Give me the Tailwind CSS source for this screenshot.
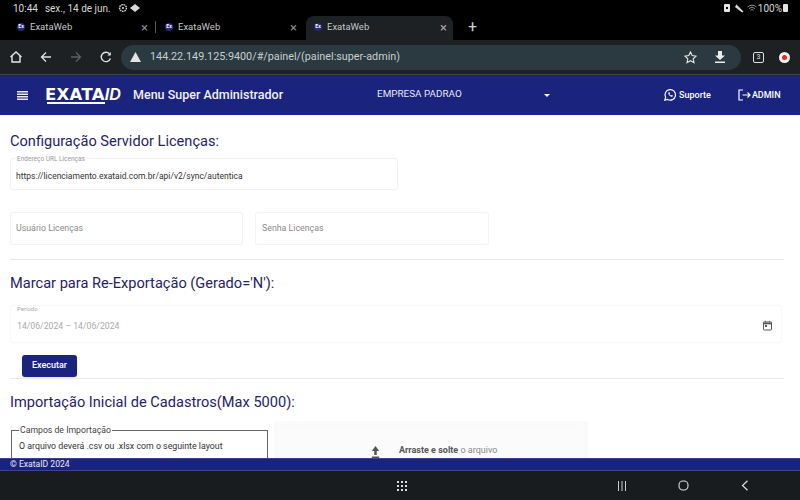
<!DOCTYPE html>
<html lang="en">
<head>
    <meta charset="UTF-8">
    <title>ExataWeb</title>
    <script src="https://cdn.jsdelivr.net/npm/@tailwindcss/browser@4"></script>
</head>
<body class="bg-white font-['Roboto',sans-serif] overflow-hidden">
<div class="w-[800px] h-[500px] flex flex-col overflow-hidden">

    <!-- status bar -->
    <div class="h-4 shrink-0 bg-black text-[#d8d8d8] text-[10px] flex items-center justify-between pl-[13px] pr-[12px]">
        <div class="flex items-center gap-[7px]">
            <span>10:44</span><span>sex., 14 de jun.</span>
            <svg class="w-[10px] h-[10px]" viewBox="0 0 10 10" fill="none" stroke="#d8d8d8" stroke-width="1.4"><circle cx="5" cy="5" r="3.4" stroke-dasharray="1.6 .7"/><circle cx="5" cy="5" r="1" fill="#d8d8d8" stroke="none"/></svg>
            <svg class="w-[10px] h-[8px] -ml-[5px]" viewBox="0 0 10 8" fill="#d8d8d8"><path d="M5 0l5 4-5 4-5-4z"/></svg>
        </div>
        <div class="flex items-center">
            <svg class="w-[6px] h-[8px]" viewBox="0 0 6 8"><rect width="6" height="8" rx="1" fill="#e5e5e5"/><rect x="2" y="3" width="2" height="2" fill="#000"/></svg>
            <svg class="w-[9px] h-[9px] ml-[5px]" viewBox="0 0 9 9" fill="none" stroke="#d8d8d8"><path d="M1 3h2l3 3v1zM1 1l7 7" stroke-width="1.3"/></svg>
            <svg class="w-[10px] h-[9px] ml-[3px]" viewBox="0 0 10 9" fill="none" stroke="#9a9a9a" stroke-width=".9"><path d="M.5 3a6.5 6.5 0 0 1 9 0M2 4.6a4.4 4.4 0 0 1 6 0M3.500 6.200a2.200 2.200 0 0 1 3 0"/></svg>
            <span class="ml-[1px]">100%</span>
            <svg class="w-[5px] h-[8px] ml-px" viewBox="0 0 5 8"><rect width="5" height="8" rx="1" fill="#e5e5e5"/></svg>
        </div>
    </div>

    <!-- tabs -->
    <div class="h-6 shrink-0 bg-black text-[#c4c7c5] text-[9.5px] flex items-stretch pl-[9px]">
        <div class="w-[148px] flex items-center pl-2 pr-px pb-[2px]">
            <span class="w-[8px] h-[8px] rounded-full bg-[#26287a] text-white text-[5px] font-bold flex items-center justify-center mr-[5px]">Ex</span>
            <span>ExataWeb</span>
            <span class="ml-auto text-[#8a8d90] text-[13px] leading-none">×</span>
            <span class="w-px h-[12px] bg-[#555] ml-[7px]"></span>
        </div>
        <div class="w-[148px] flex items-center pl-2 pr-[8px] pb-[2px]">
            <span class="w-[8px] h-[8px] rounded-full bg-[#26287a] text-white text-[5px] font-bold flex items-center justify-center mr-[5px]">Ex</span>
            <span>ExataWeb</span>
            <span class="ml-auto text-[#8a8d90] text-[13px] leading-none">×</span>
        </div>
        <div class="w-[147px] flex items-center pl-[8px] pr-[6px] pb-[2px] bg-[#1e2124] rounded-t-lg ml-[1px]">
            <span class="w-[8px] h-[8px] rounded-full bg-[#26287a] text-white text-[5px] font-bold flex items-center justify-center mr-[5px]">Ex</span>
            <span>ExataWeb</span>
            <span class="ml-auto text-[#a5a8aa] text-[13px] leading-none">×</span>
        </div>
        <span class="ml-[15px] mb-[2px] text-[#d0d0d0] text-[16px] leading-none self-center">+</span>
    </div>

    <!-- toolbar -->
    <div class="h-[35px] shrink-0 bg-[#1e2124] flex items-center pl-[9px] pr-[11px] border-b border-[#3d4048]">
        <svg class="w-[14px] h-[14px] shrink-0" viewBox="0 0 14 14" fill="none" stroke="#e6e6e6" stroke-width="1.4"><path d="M1.500 7L7 2l5.500 5M3 6v6h8V6"/></svg>
        <svg class="w-[12px] h-[12px] shrink-0 ml-[17px]" viewBox="0 0 12 12" fill="none" stroke="#e0e0e0" stroke-width="1.3"><path d="M11 6H1.500M6 1.500L1.500 6 6 10.500"/></svg>
        <svg class="w-[12px] h-[12px] shrink-0 ml-[18px]" viewBox="0 0 12 12" fill="none" stroke="#5d6064" stroke-width="1.3"><path d="M1 6h9.500M6 1.500L10.500 6 6 10.500"/></svg>
        <svg class="w-[12px] h-[12px] shrink-0 ml-[18px]" viewBox="0 0 12 12" fill="none" stroke="#e0e0e0" stroke-width="1.4"><path d="M10.400 7.500A4.700 4.700 0 1 1 9.500 2.800"/><path d="M10.800 1v3.400H7.400z" fill="#e0e0e0" stroke="none"/></svg>
        <div class="ml-[9px] shrink-0 w-[620px] h-[25px] rounded-full bg-[#2a3a40] flex items-center pl-[9px] pr-[15px] text-[#c9ced0] text-[10.8px]">
            <svg class="w-[11px] h-[10px] mr-[9px]" viewBox="0 0 11 10" fill="#e4e4e4"><path d="M5.500 0L11 10H0z"/></svg>
            <span>144.22.149.125:9400/#/painel/(painel:super-admin)</span>
            <svg class="w-[13px] h-[13px] ml-auto" viewBox="0 0 13 13" fill="none" stroke="#e6e6e6" stroke-width="1.1"><path d="M6.500 1l1.700 3.600 3.900.5-2.900 2.700.8 3.900-3.500-2-3.500 2 .8-3.900L.9 5.100l3.900-.5z"/></svg>
            <svg class="w-[12px] h-[12px] ml-[17px]" viewBox="0 0 12 12" fill="#ececec"><path d="M4 0h4v4.500h3L6 9 1 4.500h3zM1 10.500h10V12H1z"/></svg>
        </div>
        <span class="ml-[12px] shrink-0 w-[11px] h-[11px] border border-[#e0e0e0] rounded-[2px] text-[#e0e0e0] text-[7px] leading-none flex items-center justify-center">3</span>
        <span class="ml-[15px] shrink-0 w-[11px] h-[11px] rounded-full bg-[#f3f3f3] flex items-center justify-center"><span class="w-[5px] h-[5px] rounded-full bg-[#d93025]"></span></span>
    </div>

    <!-- app header -->
    <header class="h-[40px] shrink-0 bg-[#1a237e] text-white flex items-center">
        <svg class="w-[11px] h-[9px] ml-[17px]" viewBox="0 0 11 9" fill="#e8e8f4"><path d="M0 0h11v1.400H0zM0 2.500h11v1.400H0zM0 5h11v1.400H0zM0 7.600h11V9H0z"/></svg>
        <div class="ml-[17px] relative w-[79px] h-[22px] flex items-baseline pt-[3px] leading-none">
            <span class="font-['DejaVu_Sans',sans-serif] font-bold text-[16.500px] tracking-[0.300px]">EXATA</span><span class="italic font-['Liberation_Sans',sans-serif] font-bold text-[16px]">ID</span>
            <span class="absolute left-[2px] bottom-[2px] w-[58px] h-[2px] bg-white"></span>
        </div>
        <span class="ml-[9px] text-[12.500px] font-medium text-[#f0f0f8]">Menu Super Administrador</span>
        <span class="ml-[94px] mb-[2px] text-[9.900px] text-[#e8e8f4] w-[167px]">EMPRESA PADRAO</span>
        <span class="w-0 h-0 border-x-[3px] border-x-transparent border-t-[3px] border-t-white"></span>
        <svg class="w-[14px] h-[14px] ml-[113px]" viewBox="0 0 24 24" fill="none" stroke="#fff" stroke-width="2"><path d="M3 21l1.500-5A9 9 0 1 1 8 19.600z"/><path d="M9 8c-.5 3 3.500 7 7 7l1-2-2.500-1-1 1c-1-.5-2-1.500-2.500-2.500l1-1-1-2.500z" fill="#fff" stroke="none"/></svg>
        <span class="ml-[2px] mt-px text-[9px] font-medium">Suporte</span>
        <svg class="w-[13px] h-[12px] ml-[27px]" viewBox="0 0 13 12" fill="none" stroke="#fff" stroke-width="1.2"><path d="M5 1H1v10h4M4.500 6H12M9.500 3.500L12 6 9.500 8.500"/></svg>
        <span class="ml-px mt-px text-[9px] font-medium">ADMIN</span>
    </header>

    <!-- page content -->
    <main class="flex-1 min-h-0 overflow-hidden pl-[10px] pr-[16px] bg-white border-t border-[#f3f6fd]">
        <h2 class="mt-[15px] h-[20px] leading-[20px] text-[14.600px] text-[#1e2466]">Configuração Servidor Licenças:</h2>

        <div class="relative mt-[7px] w-[388px] h-[32px] border border-[#f0f0f0] rounded-[3px] flex items-center px-[5px] pt-[5px] text-[8.500px] text-[#333]">
            <span class="absolute -top-[4px] left-[4px] px-[2px] bg-white text-[6.500px] leading-[8px] text-[#999]">Endereço URL Licenças</span>
            https://licenciamento.exataid.com.br/api/v2/sync/autentica
        </div>

        <div class="flex gap-[12px] mt-[22px]">
            <div class="w-[233px] h-[33px] border border-[#f3f3f3] rounded-[3px] flex items-center px-[5px] text-[8.800px] text-[#8a8a8a]">Usuário Licenças</div>
            <div class="w-[234px] h-[33px] border border-[#f3f3f3] rounded-[3px] flex items-center px-[6px] text-[8.800px] text-[#8a8a8a]">Senha Licenças</div>
        </div>

        <hr class="mt-[14px] border-[#e6e6e6]">
        <h2 class="mt-[13px] h-[20px] leading-[20px] text-[14.600px] text-[#1e2466]">Marcar para Re-Exportação (Gerado='N'):</h2>

        <div class="relative mt-[12px] w-[772px] h-[38px] border border-[#f8f8f8] rounded-[3px] flex items-center justify-between px-[6px] pt-[6px] text-[8.700px] text-[#aaa]">
            <span class="absolute -top-[2px] left-[6px] text-[6px] text-[#aaa]">Período</span>
            <span>14/06/2024 – 14/06/2024</span>
            <svg class="w-[11px] h-[11px] mr-[2px] -mt-[4px]" viewBox="0 0 11 11" fill="none" stroke="#555"><rect x="1.500" y="2" width="8" height="8" rx=".8"/><path d="M1.500 3.500h8" stroke-width="1.600"/><path d="M3.300.8v1.500M7.700.8v1.500" /><rect x="3" y="5" width="2" height="2" fill="#555" stroke="none"/></svg>
        </div>

        <button class="block ml-[12px] mt-[12px] w-[55px] h-[22px] rounded-[3px] bg-[#1a237e] text-white text-[9px] font-medium shadow-sm">Executar</button>
        <hr class="mt-px border-[#eaeaea]">

        <h2 class="mt-[13px] h-[20px] leading-[20px] text-[14.600px] text-[#1e2466]">Importação Inicial de Cadastros(Max 5000):</h2>

        <div class="flex items-start mt-[14px]">
            <fieldset class="w-[257px] ml-px h-[40px] border border-[#666] px-[7px]">
                <legend class="text-[8.700px] text-[#444] px-[1px] leading-[8px]">Campos de Importação</legend>
                <p class="mt-[7px] text-[8.800px] text-[#333] leading-[11px]">O arquivo deverá .csv ou .xlsx com o seguinte layout</p>
            </fieldset>
            <div class="ml-[6px] -mt-[5px] w-[314px] h-[50px] border-[5px] border-[#fafafa] bg-[#fbfbfc] flex pl-[92px] pt-[19px]">
                <svg class="w-[9px] h-[12px] mt-[1px]" viewBox="0 0 11 12" preserveAspectRatio="none" fill="#555"><path d="M5.500 0L10 5H7v4H4V5H1zM1 10.500h9V12H1z"/></svg>
                <span class="ml-[19px] -mt-[1px] text-[9px] text-[#888]"><b class="font-bold text-[#555]">Arraste e solte</b> o arquivo</span>
            </div>
        </div>
    </main>

    <!-- footer -->
    <footer class="h-[13px] shrink-0 bg-[#1a237e] border-y border-[#3d4394] text-[#e8e8f4] text-[8.600px] leading-[11px] pl-[10px]">© ExataID 2024</footer>

    <!-- android nav bar -->
    <nav class="h-[29px] shrink-0 bg-[#191c1f] flex items-center">
        <svg class="w-[10px] h-[10px] ml-[397px]" viewBox="0 0 10 10" fill="#ddd"><path d="M0 0h2v2H0zM4 0h2v2H4zM8 0h2v2H8zM0 4h2v2H0zM4 4h2v2H4zM8 4h2v2H8zM0 8h2v2H0zM4 8h2v2H4zM8 8h2v2H8z"/></svg>
        <svg class="w-[10px] h-[10px] ml-[210px]" viewBox="0 0 10 10" fill="#ccc"><path d="M1 0h1v10H1zM4.500 0h1v10h-1zM8 0h1v10H8z"/></svg>
        <svg class="w-[11px] h-[11px] ml-[51px]" viewBox="0 0 11 11" fill="none" stroke="#ddd" stroke-width="1.100"><rect x="1" y="1" width="9" height="9" rx="4"/></svg>
        <svg class="w-[8px] h-[11px] ml-[52px]" viewBox="0 0 8 11" fill="none" stroke="#ddd" stroke-width="1.200"><path d="M6.500.8L1.500 5.500l5 4.700"/></svg>
    </nav>
</div>
</body>
</html>
